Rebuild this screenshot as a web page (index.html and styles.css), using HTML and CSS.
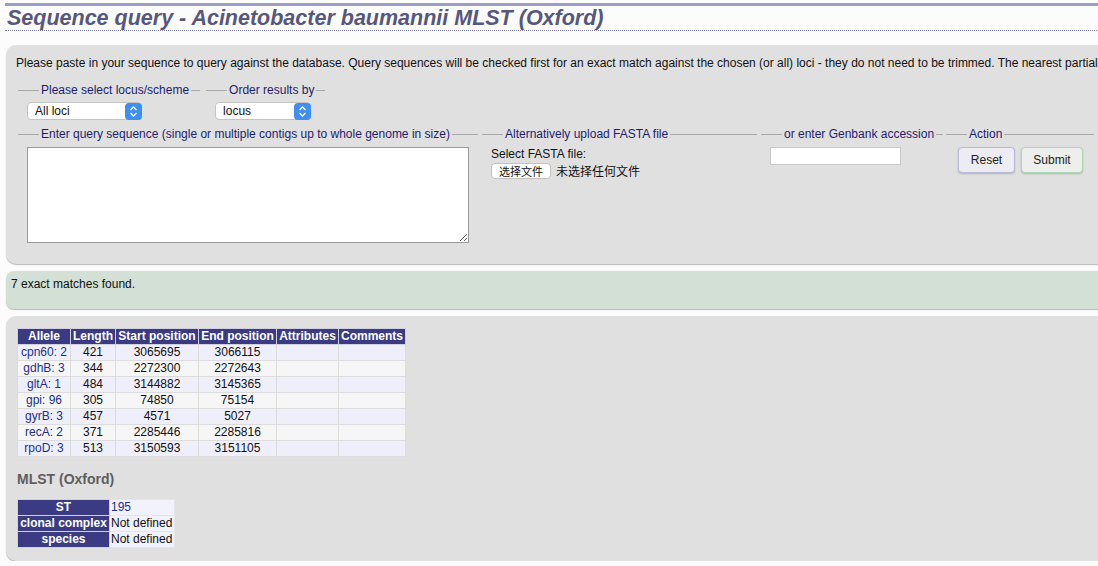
FILE: index.html
```html
<!DOCTYPE html>
<html>
<head>
<meta charset="utf-8">
<title>Sequence query</title>
<link rel="stylesheet" href="styles.css">
</head>
<body>
<div class="page">
  <h1 class="title">Sequence query - Acinetobacter baumannii MLST (Oxford)</h1>

  <div class="box queryform">
    <p class="intro">Please paste in your sequence to query against the database. Query sequences will be checked first for an exact match against the chosen (or all) loci - they do not need to be trimmed. The nearest partial</p>
    <div class="row row-top">
      <fieldset class="fs">
        <legend>Please select locus/scheme</legend>
        <div class="select sel-locus"><span class="sel-text">All loci</span>
          <svg class="sel-arrow" width="17" height="17" viewBox="0 0 17 17"><rect x="0" y="0" width="17" height="17" rx="4" fill="#3f8ef2"/><path d="M5.5 7 L8.5 4 L11.5 7 M5.5 10 L8.5 13 L11.5 10" stroke="#fff" stroke-width="1.3" fill="none"/></svg>
        </div>
      </fieldset>
      <fieldset class="fs">
        <legend>Order results by</legend>
        <div class="select sel-order"><span class="sel-text">locus</span>
          <svg class="sel-arrow" width="17" height="17" viewBox="0 0 17 17"><rect x="0" y="0" width="17" height="17" rx="4" fill="#3f8ef2"/><path d="M5.5 7 L8.5 4 L11.5 7 M5.5 10 L8.5 13 L11.5 10" stroke="#fff" stroke-width="1.3" fill="none"/></svg>
        </div>
      </fieldset>
    </div>
    <div class="row row-main">
      <fieldset class="fs fs-seq">
        <legend>Enter query sequence (single or multiple contigs up to whole genome in size)</legend>
        <textarea class="seq"></textarea>
      </fieldset>
      <fieldset class="fs fs-fasta">
        <legend>Alternatively upload FASTA file</legend>
        <div class="file-label">Select FASTA file:</div>
        <div class="file"><span class="file-btn">选择文件</span><span class="file-name">未选择任何文件</span></div>
      </fieldset>
      <fieldset class="fs fs-acc">
        <legend>or enter Genbank accession</legend>
        <input class="acc" type="text">
      </fieldset>
      <fieldset class="fs fs-action">
        <legend>Action</legend>
        <div class="buttons">
          <button class="btn btn-reset" type="button">Reset</button>
          <button class="btn btn-submit" type="button">Submit</button>
        </div>
      </fieldset>
    </div>
  </div>

  <div class="box statusgood">
    <p class="status-text">7 exact matches found.</p>
  </div>

  <div class="box results">
    <table class="alleles">
      <thead>
        <tr><th>Allele</th><th>Length</th><th>Start position</th><th>End position</th><th>Attributes</th><th>Comments</th></tr>
      </thead>
      <tbody>
        <tr><td><a href="#">cpn60: 2</a></td><td>421</td><td>3065695</td><td>3066115</td><td></td><td></td></tr>
        <tr><td><a href="#">gdhB: 3</a></td><td>344</td><td>2272300</td><td>2272643</td><td></td><td></td></tr>
        <tr><td><a href="#">gltA: 1</a></td><td>484</td><td>3144882</td><td>3145365</td><td></td><td></td></tr>
        <tr><td><a href="#">gpi: 96</a></td><td>305</td><td>74850</td><td>75154</td><td></td><td></td></tr>
        <tr><td><a href="#">gyrB: 3</a></td><td>457</td><td>4571</td><td>5027</td><td></td><td></td></tr>
        <tr><td><a href="#">recA: 2</a></td><td>371</td><td>2285446</td><td>2285816</td><td></td><td></td></tr>
        <tr><td><a href="#">rpoD: 3</a></td><td>513</td><td>3150593</td><td>3151105</td><td></td><td></td></tr>
      </tbody>
    </table>

    <h2 class="scheme">MLST (Oxford)</h2>

    <table class="profile">
      <tr><th>ST</th><td><a href="#">195</a></td></tr>
      <tr><th>clonal complex</th><td>Not defined</td></tr>
      <tr><th>species</th><td>Not defined</td></tr>
    </table>
  </div>
</div>
</body>
</html>
```

FILE: styles.css
```css
html, body {
  margin: 0;
  padding: 0;
  background: #fcfcfc;
  overflow: hidden;
}

body {
  font-family: "Liberation Sans", Arial, Helvetica, sans-serif;
  font-size: 12px;
  color: #111;
}

.page {
  width: 1400px;
  padding: 3px 0 0 5px;
}

.title {
  margin: 0;
  padding: 1px 0 0 2px;
  border-top: 3px solid #9d9dc8;
  border-bottom: 1px dotted #8080a8;
  font-size: 21.5px;
  line-height: 23px;
  font-weight: bold;
  font-style: italic;
  color: #57577c;
}

.box {
  margin-left: 1px;
  background: #e0e0e0;
  border-radius: 10px 0 0 10px;
  box-shadow: 0 1px 1px #b8b8b8;
}

.queryform {
  margin-top: 14px;
  padding: 11px 10px 21px 10px;
}

.intro {
  margin: 0;
  line-height: 14px;
  white-space: nowrap;
}

.row {
  display: flex;
  align-items: flex-start;
  padding-left: 2px;
}

.row-top {
  margin-top: 13px;
}

.row-main {
  margin-top: 7px;
}

.fs {
  margin: 0 6px 0 0;
  padding: 6px 9px 0 9px;
  border: none;
  border-top: 1px solid #a8a8a8;
  min-width: 0;
}

.row-top .fs {
  padding-top: 5px;
}

.fs legend {
  margin-left: 12px;
  padding: 0 2px;
  line-height: 14px;
  color: #1c1c6e;
  white-space: nowrap;
}

.select {
  display: flex;
  align-items: center;
  height: 18px;
  box-sizing: border-box;
  background: #fff;
  border: 1px solid #c4c4c4;
  border-radius: 4px;
  padding-left: 7px;
}

.sel-locus {
  width: 115px;
}

.sel-order {
  width: 96px;
}

.sel-text {
  flex: 1;
  color: #111;
}

.sel-arrow {
  display: block;
  margin-right: -1px;
}

.fs-seq {
  width: 460px;
  box-sizing: border-box;
  margin-right: 4px;
}

.fs-fasta {
  width: 275px;
  box-sizing: border-box;
  margin-right: 4px;
}

.fs-acc {
  width: 182px;
  box-sizing: border-box;
  margin-right: 3px;
}

.fs-action {
  width: 148px;
  box-sizing: border-box;
  margin-right: 0;
}

.seq {
  display: block;
  width: 442px;
  height: 96px;
  box-sizing: border-box;
  margin: 0;
  border: 1px solid #9a9a9a;
  background: #fff;
}

.file-label {
  line-height: 14px;
}

.file {
  display: flex;
  align-items: center;
  margin-top: 2px;
}

.file-btn {
  display: inline-block;
  height: 16px;
  line-height: 14px;
  box-sizing: border-box;
  padding: 0 7px;
  background: #fff;
  border: 1px solid #c0c0c0;
  border-radius: 4px;
  font-family: "Noto Sans CJK SC", sans-serif;
  font-size: 11px;
}

.file-name {
  margin-left: 5px;
  font-family: "Noto Sans CJK SC", sans-serif;
  font-size: 12px;
  line-height: 14px;
}

.acc {
  display: block;
  width: 131px;
  height: 18px;
  box-sizing: border-box;
  margin: 0;
  border: 1px solid #c8c8c8;
  background: #fff;
}

.buttons {
  display: flex;
  gap: 6px;
  margin-left: 3px;
}

.btn {
  height: 26px;
  box-sizing: border-box;
  margin: 0;
  border-radius: 4px;
  font-family: "Liberation Sans", Arial, sans-serif;
  font-size: 12px;
  color: #222;
  box-shadow: 0 1px 2px rgba(0, 0, 0, 0.2);
}

.btn-reset {
  width: 57px;
  background: #ececf2;
  border: 1px solid #b9b9d8;
}

.btn-submit {
  width: 62px;
  background: #ecefec;
  border: 1px solid #a9d8b1;
}

.statusgood {
  margin-top: 7px;
  height: 38px;
  box-sizing: border-box;
  background: #d3e0d5;
  padding: 6px 5px 0 5px;
  border-radius: 8px 0 0 8px;
}

.status-text {
  margin: 0;
  line-height: 14px;
}

.results {
  margin-top: 7px;
  padding: 12px 11px 13px 11px;
}

.alleles,
.profile {
  border-collapse: collapse;
  border-spacing: 0;
}

.alleles th,
.profile th {
  background: #3b3b84;
  color: #fff;
  font-weight: bold;
  line-height: 15px;
  padding: 0 2px;
  border: 1px solid #d0d0e0;
  text-align: center;
  white-space: nowrap;
}

.alleles td {
  line-height: 15px;
  padding: 0 2px;
  text-align: center;
  border: 1px solid #dcdcdc;
  white-space: nowrap;
}

.alleles tbody tr:nth-child(odd) td {
  background: #efeffb;
}

.alleles tbody tr:nth-child(even) td {
  background: #f6f6f6;
}

.alleles th:nth-child(1) { width: 48px; }
.alleles th:nth-child(2) { width: 40px; }
.alleles th:nth-child(3) { width: 78px; }
.alleles th:nth-child(4) { width: 73px; }
.alleles th:nth-child(5) { width: 57px; }
.alleles th:nth-child(6) { width: 62px; }

a {
  color: #22308c;
  text-decoration: none;
}

.scheme {
  margin: 14px 0 12px 0;
  font-size: 14px;
  line-height: 16px;
  font-weight: bold;
  color: #5e5e5e;
}

.profile th {
  width: 87px;
}

.profile td {
  width: 60px;
  line-height: 15px;
  padding: 0 2px 0 1px;
  text-align: left;
  background: #f2f2fd;
  border: 1px solid #e4e4ee;
  white-space: nowrap;
}
```
